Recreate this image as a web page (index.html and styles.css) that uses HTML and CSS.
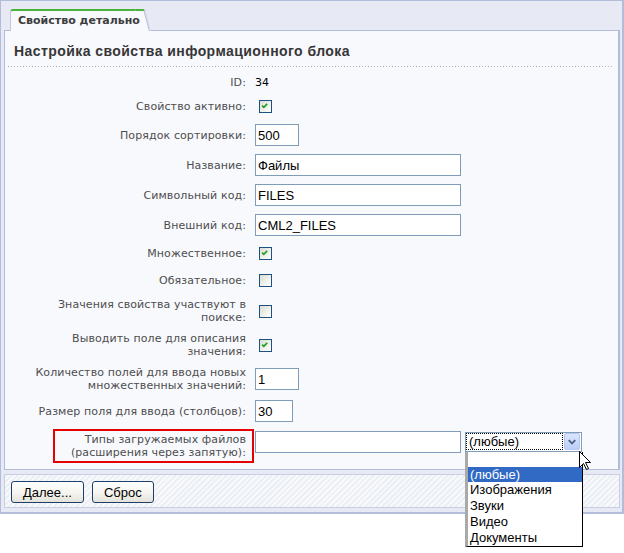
FILE: index.html
```html
<!DOCTYPE html>
<html lang="ru">
<head>
<meta charset="utf-8">
<title>Свойство детально</title>
<link rel="stylesheet" href="styles.css">
</head>
<body>
<div class="window">
  <div class="tabs"><div class="tab">Свойство детально</div></div>
  <div class="panel">
    <div class="title">Настройка свойства информационного блока</div>
    <table class="form">
      <tr><td class="lbl">ID:</td><td class="ctl id">34</td></tr>
      <tr><td class="lbl">Свойство активно:</td><td class="ctl"><span class="cb"><svg viewBox="0 0 13 13" width="11" height="11"><path d="M2.5 5.5 L4.5 7.5 L8.5 3.5" fill="none" stroke="#21a121" stroke-width="2"/></svg></span></td></tr>
      <tr><td class="lbl">Порядок сортировки:</td><td class="ctl"><input class="txt sz-s" type="text" value="500"></td></tr>
      <tr><td class="lbl">Название:</td><td class="ctl"><input class="txt sz-l" type="text" value="Файлы"></td></tr>
      <tr><td class="lbl">Символьный код:</td><td class="ctl"><input class="txt sz-l" type="text" value="FILES"></td></tr>
      <tr><td class="lbl">Внешний код:</td><td class="ctl"><input class="txt sz-l" type="text" value="CML2_FILES"></td></tr>
      <tr><td class="lbl">Множественное:</td><td class="ctl"><span class="cb"><svg viewBox="0 0 13 13" width="11" height="11"><path d="M2.5 5.5 L4.5 7.5 L8.5 3.5" fill="none" stroke="#21a121" stroke-width="2"/></svg></span></td></tr>
      <tr><td class="lbl">Обязательное:</td><td class="ctl"><span class="cb"></span></td></tr>
      <tr><td class="lbl">Значения свойства участвуют в<br>поиске:</td><td class="ctl"><span class="cb"></span></td></tr>
      <tr><td class="lbl">Выводить поле для описания<br>значения:</td><td class="ctl"><span class="cb"><svg viewBox="0 0 13 13" width="11" height="11"><path d="M2.5 5.5 L4.5 7.5 L8.5 3.5" fill="none" stroke="#21a121" stroke-width="2"/></svg></span></td></tr>
      <tr><td class="lbl">Количество полей для ввода новых<br>множественных значений:</td><td class="ctl"><input class="txt sz-s" type="text" value="1"></td></tr>
      <tr><td class="lbl">Размер поля для ввода (столбцов):</td><td class="ctl"><input class="txt sz-xs" type="text" value="30"></td></tr>
      <tr>
        <td class="lbl hl-cell"><span class="hl">Типы загружаемых файлов<br>(расширения через запятую):</span></td>
        <td class="ctl top">
          <div class="ctl-row">
            <input class="txt sz-l" type="text" value="">
            <div class="select">
              <span class="sel-text">(любые)</span>
              <span class="sel-btn"><svg viewBox="0 0 15 16" width="15" height="16"><path d="M4 6 L7.5 9.5 L11 6" fill="none" stroke="#4d6185" stroke-width="2"/></svg></span>
              <ul class="options">
                <li class="opt short"></li>
                <li class="opt short on">(любые)</li>
                <li class="opt">Изображения</li>
                <li class="opt">Звуки</li>
                <li class="opt">Видео</li>
                <li class="opt">Документы</li>
              </ul>
              <svg class="cursor" viewBox="0 0 12 19" width="12" height="19"><path d="M0.5 0.5 L0.5 16.5 L4.5 12.5 L7.5 18.5 L9.5 17.5 L6.5 11.5 L11.5 11.5 Z" fill="#fff" stroke="#000" stroke-width="1"/></svg>
            </div>
          </div>
        </td>
      </tr>
    </table>
  </div>
  <div class="buttons">
    <button class="btn" type="button">Далее...</button>
    <button class="btn" type="button">Сброс</button>
  </div>
</div>
</body>
</html>
```
FILE: styles.css
```css
html, body {
  margin: 0;
  padding: 0;
  background: #ffffff;
}

body {
  min-height: 553px;
}

.window {
  width: 624px;
  box-sizing: border-box;
  border: 1px solid #b3bcd9;
  border-right-width: 2px;
  border-bottom-width: 2px;
  background: #e7e9f4;
  padding: 8px 2px 4px 3px;
  font-family: "DejaVu Sans", Verdana, sans-serif;
  font-size: 11px;
}

.tabs {
  display: flex;
}

.tab {
  position: relative;
  z-index: 1;
  margin-left: 6px;
  margin-bottom: -1px;
  height: 19px;
  padding: 1px 4px 0 7px;
  background: #f8f9fd;
  border-top: 2px solid #4ab33a;
  border-left: 1px solid #c0c7de;
  border-top-left-radius: 3px;
  font-weight: bold;
  color: #3d3d3d;
  line-height: 17px;
  white-space: nowrap;
}

.tab::after {
  content: "";
  position: absolute;
  z-index: -1;
  top: -2px;
  right: 0;
  width: 8px;
  height: 20px;
  background: #f8f9fd;
  border-top: 2px solid #4ab33a;
  border-right: 1px solid #b7bfd9;
  box-shadow: 1px 0 0 #d6dbea;
  transform: skewX(15deg);
  transform-origin: top left;
}

.panel {
  background: #f8f9fd;
  border: 1px solid #b3bcd9;
  border-right-width: 2px;
  padding: 0 0 3px 0;
}

.title {
  margin: 0 5px 0 3px;
  padding: 12px 0 0 6px;
  height: 24px;
  font-family: "Liberation Sans", Arial, sans-serif;
  font-weight: bold;
  font-size: 14px;
  line-height: 17px;
  letter-spacing: 0.43px;
  color: #363636;
  border-bottom: 1px solid transparent;
  background: linear-gradient(to right, #b2b4bc 1px, transparent 1px) left bottom / 3px 1px repeat-x;
}

.form {
  border-collapse: collapse;
  border-spacing: 0;
  margin-top: 4px;
}

.form td {
  padding: 4px 0;
  line-height: 13px;
  vertical-align: middle;
}

.form td.lbl {
  width: 241px;
  padding-right: 8px;
  text-align: right;
  color: #4d4d4d;
  white-space: nowrap;
  letter-spacing: 0.1px;
}

.form td.ctl {
  padding-left: 1px;
}

.form td.id {
  color: #000;
}

.form td.top {
  vertical-align: top;
  padding-top: 5px;
}

.form td.hl-cell {
  padding: 3px 0;
}

.hl {
  display: inline-block;
  border: 2px solid #e60000;
  padding: 2px 6px 2px 16px;
}

.cb {
  display: flex;
  align-items: center;
  justify-content: center;
  box-sizing: border-box;
  width: 13px;
  height: 13px;
  margin: 3px 0 3px 4px;
  border: 1px solid #1c5180;
  background: linear-gradient(135deg, #dcdcd6 0%, #f2f2ee 60%, #ffffff 100%);
}

.txt {
  display: block;
  box-sizing: border-box;
  height: 22px;
  margin: 0;
  padding: 0 2px;
  border: 1px solid #7f9db9;
  background: #fff;
  font-family: "Liberation Sans", Arial, sans-serif;
  font-size: 13px;
  color: #000;
  outline: none;
}

.sz-s { width: 44px; }
.sz-xs { width: 38px; }
.sz-l { width: 206px; }

.ctl-row {
  display: flex;
  align-items: flex-start;
  gap: 4px;
}

.select {
  position: relative;
  margin-top: 1px;
  box-sizing: border-box;
  width: 117px;
  height: 20px;
  border: 1px solid #7f9db9;
  background: #fff;
  display: flex;
  padding: 0 0 1px 0;
  font-family: "Liberation Sans", Arial, sans-serif;
  font-size: 13px;
}

.sel-text {
  flex: 1;
  border: 1px dotted #000;
  padding-left: 2px;
  line-height: 16px;
  color: #000;
}

.sel-btn {
  box-sizing: border-box;
  width: 16px;
  height: 17px;
  margin: 0 1px 0 1px;
  border: 1px solid #b4c7f4;
  border-radius: 2px;
  background: linear-gradient(#dbe5fd, #bccff9);
  display: flex;
  align-items: center;
  justify-content: center;
}

.options {
  position: absolute;
  z-index: 5;
  top: calc(100% + 1px);
  left: -1px;
  box-sizing: border-box;
  width: 118px;
  margin: 0;
  padding: 0;
  list-style: none;
  background: #fff;
  border: 1px solid #000;
  border-top: 0;
  border-left: 3px solid #a9a9a9;
}

.opt {
  height: 16px;
  line-height: 16px;
  padding-left: 2px;
  color: #000;
  white-space: nowrap;
}

.opt.short {
  height: 15px;
  line-height: 15px;
}

.opt.on {
  background: #316ac5;
  color: #fff;
}

.cursor {
  position: absolute;
  z-index: 6;
  left: 113px;
  top: 18px;
}

.buttons {
  margin-top: 4px;
  border: 1px solid #c9cfe3;
  padding: 6px 6px 4px;
  display: flex;
  gap: 8px;
  background: repeating-linear-gradient(135deg, #eceff6 0 2px, #f8f9fb 2px 4px);
}

.btn {
  box-sizing: border-box;
  height: 22px;
  margin: 0;
  padding: 0 11px;
  border: 1px solid #1d3f6c;
  border-radius: 3px;
  background: linear-gradient(#ffffff, #f5f4ef 55%, #e4e2d9);
  font-family: "Liberation Sans", Arial, sans-serif;
  font-size: 13px;
  color: #000;
}
```
